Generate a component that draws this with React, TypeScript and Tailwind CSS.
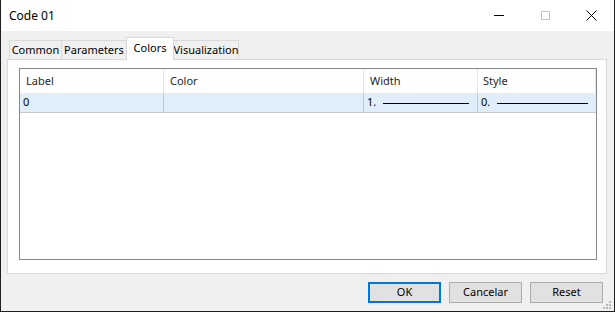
import type { ReactNode } from 'react';

const font = { fontFamily: '"Noto Sans", "Liberation Sans", sans-serif' };

function Tab({ label, selected, className }: { label: string; selected?: boolean; className: string }) {
  if (selected) {
    return (
      <div
        className={`relative z-10 -mb-px flex h-[23px] shrink-0 items-start justify-center border border-b-0 border-[#d9d9d9] bg-white pt-[2px] text-[11px] text-black ${className}`}
      >
        {label}
      </div>
    );
  }
  return (
    <div
      className={`flex h-[19px] shrink-0 items-center justify-center border border-b-0 border-[#d9d9d9] bg-[#f0f0f0] text-[11px] text-black ${className}`}
    >
      {label}
    </div>
  );
}

function Button({ children, primary }: { children: ReactNode; primary?: boolean }) {
  return (
    <div
      className={`flex h-[21px] w-[73px] items-center justify-center bg-[#e1e1e1] text-[11px] text-black ${
        primary ? 'border-2 border-[#0078d7]' : 'border border-[#adadad]'
      }`}
    >
      {children}
    </div>
  );
}

function LineSample() {
  return <div className="mt-px h-px flex-1 bg-black" />;
}

export default function App() {
  return (
    <div
      className="flex h-[312px] w-[615px] flex-col overflow-hidden border-x border-b border-[#1f1f1f] bg-[#f0f0f0]"
      style={font}
    >
      {/* title bar */}
      <div className="flex h-[31px] shrink-0 items-center bg-white">
        <div className="flex-1 pl-[8px] text-[12px] text-black">Code 01</div>
        <div className="flex h-full w-[46px] items-center justify-center">
          <div className="h-px w-[10px] bg-black" />
        </div>
        <div className="flex h-full w-[46px] items-center justify-center">
          <div className="h-[9px] w-[9px] border border-[#c4c4c4]" />
        </div>
        <div className="flex h-full w-[46px] items-center justify-center">
          <svg width="11" height="11" viewBox="0 0 11 11">
            <path d="M0.5 0.5 L10.5 10.5 M10.5 0.5 L0.5 10.5" stroke="#000" strokeWidth="1" />
          </svg>
        </div>
      </div>

      {/* body */}
      <div className="flex flex-1 flex-col pl-[6px] pt-[6px]">
        <div className="ml-[2px] flex items-end">
          <Tab label="Common" className="w-[53px]" />
          <Tab label="Parameters" className="-ml-px w-[66px]" />
          <Tab label="Colors" selected className="-ml-px w-[48px]" />
          <Tab label="Visualization" className="-ml-px w-[66px]" />
        </div>

        <div className="h-[215px] w-[600px] border border-[#d9d9d9] bg-white pl-[11px] pt-[8px]">
          <div className="h-[192px] w-[578px] border border-[#828790] bg-white text-[11px]">
            <div className="flex h-[24px] items-center text-[#1e1e1e]">
              <div className="flex h-full w-[144px] items-center border-r border-[#e5e5e5] pl-[6px]">Label</div>
              <div className="flex h-full w-[200px] items-center border-r border-[#e5e5e5] pl-[6px]">Color</div>
              <div className="flex h-full w-[114px] items-center border-r border-[#e5e5e5] pl-[6px]">Width</div>
              <div className="flex h-full w-[118px] items-center border-r border-[#e5e5e5] pl-[5px]">Style</div>
            </div>
            <div className="flex h-[20px] w-[576px] items-center border-b border-[#c8c8c8] bg-[#e0eefa] text-black">
              <div className="flex h-full w-[144px] items-center border-r border-[#c8c8c8] pl-[3px]">0</div>
              <div className="h-full w-[200px] border-r border-[#c8c8c8]" />
              <div className="flex h-full w-[114px] items-center gap-[7px] border-r border-[#c8c8c8] pl-[3px] pr-[8px]">
                <span>1.</span>
                <LineSample />
              </div>
              <div className="flex h-full w-[118px] items-center gap-[7px] pl-[3px] pr-[8px]">
                <span>0.</span>
                <LineSample />
              </div>
            </div>
          </div>
        </div>

        <div className="mr-[11px] mt-[8px] flex justify-end gap-[8px]">
          <Button primary>OK</Button>
          <Button>Cancelar</Button>
          <Button>Reset</Button>
        </div>
        <div className="mr-[2px] mt-[-2px] flex justify-end">
          <svg width="9" height="9" viewBox="0 0 9 9">
            <rect x="6" y="0" width="2" height="2" fill="#b8b8b8" />
            <rect x="3" y="3" width="2" height="2" fill="#b8b8b8" />
            <rect x="6" y="3" width="2" height="2" fill="#b8b8b8" />
            <rect x="0" y="6" width="2" height="2" fill="#b8b8b8" />
            <rect x="3" y="6" width="2" height="2" fill="#b8b8b8" />
            <rect x="6" y="6" width="2" height="2" fill="#b8b8b8" />
          </svg>
        </div>
      </div>
    </div>
  );
}
